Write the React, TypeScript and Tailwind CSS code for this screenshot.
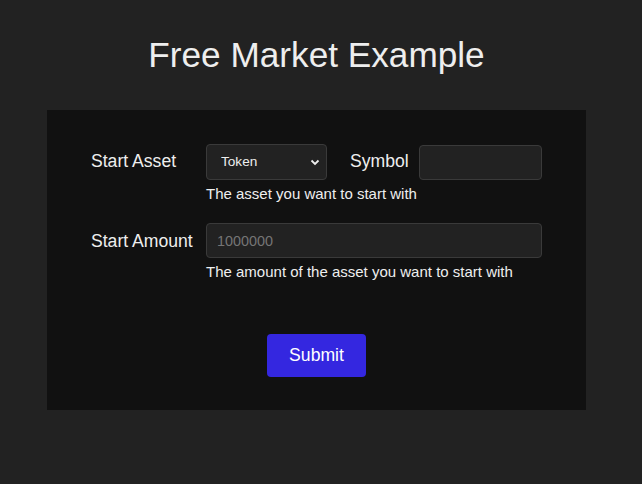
import React from "react";

export default function App() {
  return (
    <div className="min-h-[484px] bg-[#222222] text-[#eeeeee] font-['Liberation_Sans',Arial,sans-serif]">
      <div className="w-[539px] ml-[47px] pt-[35px]">
        <h1 className="text-center text-[35.2px] leading-[40px] font-normal">Free Market Example</h1>
        <div className="mt-[35px] bg-[#111111] pt-[34px] pb-[33px]">
          <div className="pl-[44px] grid grid-cols-[103px_1fr] gap-x-[12px]">
            <div className="h-[36px] flex items-center pb-[2px] text-[17.6px] leading-[20px]">Start Asset</div>
            <div>
              <div className="flex items-center">
                <div className="relative w-[121px] h-[36px]">
                  <select
                    defaultValue="Token"
                    className="appearance-none w-full h-full bg-[#222222] border border-[#3a3a3a] rounded-[4px] pl-[14px] text-[13.6px] text-[#eeeeee] outline-none"
                  >
                    <option>Token</option>
                  </select>
                  <svg className="absolute right-[7px] top-[15px] pointer-events-none" width="10" height="7" viewBox="0 0 10 7">
                    <path d="M1.5 1.5 L5 5 L8.5 1.5" stroke="#eeeeee" strokeWidth="1.8" fill="none" />
                  </svg>
                </div>
                <div className="ml-[23px] pb-[2px] text-[17.6px] leading-[20px]">Symbol</div>
                <input
                  className="ml-[10px] w-[123px] h-[35px] bg-[#222222] border border-[#3a3a3a] rounded-[4px] px-[10px] text-[14.4px] text-[#eeeeee] outline-none"
                />
              </div>
              <div className="mt-[5px] text-[15px] leading-[17px]">The asset you want to start with</div>
            </div>

            <div className="mt-[21px] h-[35px] flex items-center text-[17.6px] leading-[20px]">Start Amount</div>
            <div className="mt-[21px]">
              <input
                placeholder="1000000"
                className="w-[336px] h-[35px] bg-[#222222] border border-[#3a3a3a] rounded-[4px] px-[10px] text-[14.4px] text-[#eeeeee] placeholder:text-[#757575] outline-none"
              />
              <div className="mt-[5px] text-[15px] leading-[17px]">The amount of the asset you want to start with</div>
            </div>
          </div>
          <div className="flex justify-center mt-[54px]">
            <button className="w-[99px] h-[43px] bg-[#3427e0] rounded-[4px] text-white text-[17.6px]">Submit</button>
          </div>
        </div>
      </div>
    </div>
  );
}
